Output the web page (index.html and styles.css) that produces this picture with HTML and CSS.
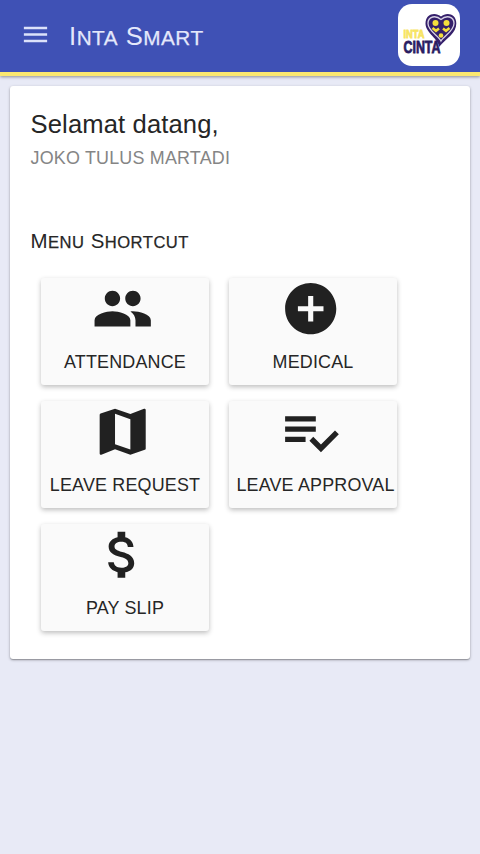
FILE: index.html
```html
<!DOCTYPE html>
<html lang="id">
<head>
<meta charset="utf-8">
<title>Inta Smart</title>
<link rel="stylesheet" href="styles.css">
</head>
<body>
<header class="toolbar">
  <svg class="menu" viewBox="0 0 24 24"><path d="M3 18h18v-2H3v2zm0-5h18v-2H3v2zm0-7v2h18V6H3z"/></svg>
  <h1 class="title">I<span class="sc">nta</span> S<span class="sc">mart</span></h1>
  <svg class="logo" viewBox="0 0 62 62">
    <rect width="62" height="62" rx="14" fill="#fff"/>
    <path d="M41 43C41 35 27.500 29 27.500 19.500C27.500 9 38 8 43 12.500C48 8 58.300 9 58.300 19.500C58.300 29 49 34 41 43Z" fill="#35206b"/>
    <path d="M43 37C41 32 30 27 30 19.500C30 12 38 11 43 15.500C48 11 56 12 56 19.500C56 27 46 32 43 37Z" fill="#35206b" stroke="#d8d3e6" stroke-width="1.300"/>
    <g fill="#f5df3c"><circle cx="37.500" cy="19" r="3"/><circle cx="48.500" cy="19" r="3"/><circle cx="43" cy="31.500" r="2.300"/></g>
    <path d="M34.500 24l3.500 2.800 3-2.300M45 24.500l3 2.300 3.500-2.800" fill="none" stroke="#f5df3c" stroke-width="2.500"/>
    <text class="logo-inta" x="5.500" y="34" textLength="21" lengthAdjust="spacingAndGlyphs">INTA</text>
    <text class="logo-cinta" x="5.500" y="49.300" textLength="37" lengthAdjust="spacingAndGlyphs">CINTA</text>
  </svg>
</header>
<main class="card">
  <h2 class="greeting">Selamat datang,</h2>
  <p class="name">JOKO TULUS MARTADI</p>
  <h3 class="section">M<span class="sc">enu</span> S<span class="sc">hortcut</span></h3>
  <nav class="grid">
    <a class="tile"><svg class="icon" viewBox="0 0 24 24"><path d="M16 11c1.660 0 2.990-1.340 2.990-3S17.660 5 16 5s-3 1.340-3 3 1.340 3 3 3zm-8 0c1.660 0 2.990-1.340 2.990-3S9.660 5 8 5 5 6.340 5 8s1.340 3 3 3zm0 2c-2.330 0-7 1.170-7 3.500V19h14v-2.500C15 14.170 10.330 13 8 13zm8 0c-.290 0-.620.020-.970.050 1.160.840 1.970 1.970 1.970 3.450V19h6v-2.500c0-2.330-4.670-3.500-7-3.500z"/></svg><span class="label">ATTENDANCE</span></a>
    <a class="tile"><svg class="icon" viewBox="0 0 24 24"><path d="M12 2C6.480 2 2 6.480 2 12s4.480 10 10 10 10-4.480 10-10S17.520 2 12 2zm5 11h-4v4h-2v-4H7v-2h4V7h2v4h4v2z"/></svg><span class="label">MEDICAL</span></a>
    <a class="tile"><svg class="icon" viewBox="0 0 24 24"><path d="M20.500 3l-.160.030L15 5.100 9 3 3.360 4.900c-.210.070-.360.250-.360.480V20.500c0 .280.220.500.500.500l.160-.030L9 18.900l6 2.100 5.640-1.900c.210-.070.360-.250.360-.480V3.500c0-.280-.220-.500-.500-.500zM15 19l-6-2.110V5l6 2.110V19z"/></svg><span class="label">LEAVE REQUEST</span></a>
    <a class="tile"><svg class="icon" viewBox="0 0 24 24"><path d="M14 10H2v2h12v-2zm0-4H2v2h12V6zM2 16h8v-2H2v2zm19.500-4.500L23 13l-6.990 7-4.510-4.500L13 14l3.010 3 5.490-5.500z"/></svg><span class="label label-wide">LEAVE APPROVAL</span></a>
    <a class="tile"><svg class="icon" viewBox="0 0 24 24"><path d="M11.800 10.900c-2.270-.590-3-1.200-3-2.150 0-1.090 1.010-1.850 2.700-1.850 1.780 0 2.440.850 2.500 2.100h2.210c-.070-1.720-1.120-3.300-3.210-3.810V3h-3v2.160c-1.940.420-3.500 1.680-3.500 3.610 0 2.310 1.910 3.460 4.700 4.130 2.500.600 3 1.480 3 2.410 0 .690-.490 1.790-2.700 1.790-2.060 0-2.870-.920-2.980-2.100h-2.200c.120 2.190 1.760 3.420 3.680 3.830V21h3v-2.150c1.950-.370 3.500-1.500 3.500-3.550 0-2.840-2.430-3.810-4.700-4.400z"/></svg><span class="label">PAY SLIP</span></a>
  </nav>
</main>
</body>
</html>
```

FILE: styles.css
```css
* { box-sizing: border-box; }
body {
  margin: 0;
  min-height: 854px;
  background: #e8eaf6;
  color: #262626;
  font-family: "Liberation Sans", Arial, sans-serif;
}
h1, h2, h3, p { margin: 0; font-weight: 400; }
.sc { font-size: .81em; text-transform: uppercase; -webkit-text-stroke: .25px currentColor; }
.toolbar {
  display: flex;
  align-items: center;
  height: 76px;
  padding: 0 20px;
  background: #3f51b5;
  border-bottom: 4px solid #fbe870;
  box-shadow: 0 1px 3px rgba(0, 0, 0, .4);
}
.menu { width: 31px; height: 31px; margin-top: -3px; fill: #dce2fa; }
.title {
  flex: 1;
  margin: 0 0 0 18px;
  font-size: 25.6px;
  letter-spacing: .5px;
  color: #e4e8fb;
}
.logo { width: 62px; height: 62px; margin-top: -3px; }
.logo-inta { font: bold 11px "Liberation Sans", sans-serif; fill: #f7e463; stroke: #f7e463; stroke-width: .8px; }
.logo-cinta { font: bold 17px "Liberation Sans", sans-serif; fill: #2a1c62; stroke: #2a1c62; stroke-width: .8px; }
.card {
  height: 573px;
  margin: 10px 10px 0;
  padding: 20px 20.5px;
  background: #fff;
  border-radius: 3px;
  box-shadow: 0 1px 3px rgba(0, 0, 0, .3), 0 1px 1px rgba(0, 0, 0, .2);
}
.greeting { font-size: 25.6px; line-height: 36px; letter-spacing: .13px; }
.name { margin-top: 4px; font-size: 17.92px; line-height: 24px; letter-spacing: .2px; color: #858585; }
.section {
  height: 28px;
  margin-top: 57px;
  font-size: 20.48px;
  line-height: 28px;
  letter-spacing: .48px;
}
.grid {
  display: grid;
  grid-template-columns: 168px 168px;
  grid-auto-rows: 107.5px;
  gap: 15.5px 20px;
  margin: 22.5px 0 0 10.5px;
}
.tile {
  display: flex;
  flex-direction: column;
  align-items: center;
  background: #fafafa;
  border-radius: 3px;
  box-shadow: 0 2px 5px rgba(0, 0, 0, .26);
}
.icon { width: 61.4px; height: 61.4px; margin-right: 5.6px; fill: #212121; }
.label {
  margin-top: 11.2px;
  font-size: 17.92px;
  line-height: 24px;
  letter-spacing: .18px;
  white-space: nowrap;
}
.label-wide { margin-left: 5px; }
```
